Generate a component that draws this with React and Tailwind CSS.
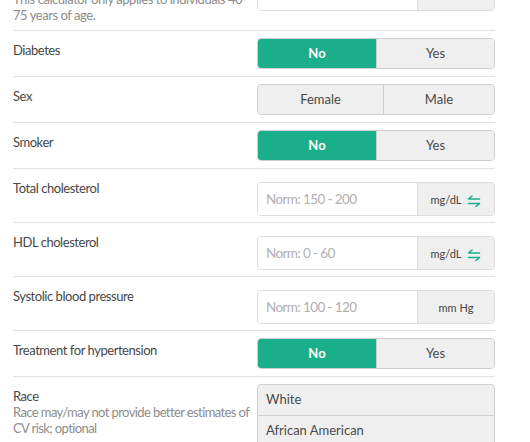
import React from 'react';

const SwapIcon = () => (
  <svg width="14" height="12" viewBox="0 0 14 12" fill="none" stroke="#1aae8a" strokeWidth="1.6" strokeLinecap="round">
    <path d="M1.5 4H12.5M1.5 4L5 1" />
    <path d="M1.5 8.5H12.5M12.5 8.5L9 11.5" />
  </svg>
);

const Toggle = ({ options, selected, widths }) => (
  <div className="flex h-[31px] w-[238px] rounded-[4px] border border-[#cfcfcf] overflow-hidden">
    {options.map((opt, i) => (
      <div
        key={opt}
        className={
          'flex items-center justify-center text-[13px] ' +
          (i > 0 ? 'border-l border-[#cfcfcf] ' : '') +
          (selected === i ? 'bg-[#1bae8b] text-white font-bold' : 'bg-[#efefef] text-[#4a4a4a]')
        }
        style={{ width: widths ? widths[i] : undefined, flex: widths ? 'none' : 1 }}
      >
        {opt}
      </div>
    ))}
  </div>
);

const NumInput = ({ placeholder, unit, swap }) => (
  <div className="mt-[6px] mb-[-1px] flex h-[34px] w-[238px] rounded-[4px] border border-[#dcdcdc] overflow-hidden">
    <div className="flex w-[159px] items-center bg-white pl-[8px] text-[13.5px] tracking-[-0.6px] text-[#b0b0b0]">{placeholder}</div>
    <div className="flex flex-1 items-center justify-center gap-[6px] border-l border-[#dcdcdc] bg-[#efefef] pt-[3px] text-[11px] text-[#444]">
      <span>{unit}</span>
      {swap && <SwapIcon />}
    </div>
  </div>
);

const Row = ({ label, desc, children }) => (
  <div className="flex items-start justify-between border-b border-[#e2e2e2] pt-[7px] pb-[7px]">
    <div className="pt-[4px] tracking-[-0.45px]">
      <div className="text-[13px] leading-[16px] text-[#484848]">{label}</div>
      {desc && <div className="w-[236px] text-[13px] leading-[16px] text-[#8c8c8c]">{desc}</div>}
    </div>
    {children}
  </div>
);

export default function App() {
  return (
    <div className="h-[442px] w-[530px] overflow-hidden bg-white" style={{ fontFamily: 'Lato, "Noto Sans", sans-serif' }}>
      <div className="ml-[13px] mt-[-36px] w-[482px]">
        <Row label="Age" desc="This calculator only applies to individuals 40-75 years of age.">
          <div className="mt-[6px] flex h-[34px] w-[238px] rounded-[4px] border border-[#dcdcdc] overflow-hidden">
            <div className="w-[159px] bg-white" />
            <div className="flex flex-1 items-center justify-center border-l border-[#dcdcdc] bg-[#efefef] text-[11px] text-[#444]">years</div>
          </div>
        </Row>
        <Row label="Diabetes">
          <Toggle options={['No', 'Yes']} selected={0} widths={[118, 118]} />
        </Row>
        <Row label="Sex">
          <Toggle options={['Female', 'Male']} selected={-1} widths={[125, 111]} />
        </Row>
        <Row label="Smoker">
          <Toggle options={['No', 'Yes']} selected={0} widths={[118, 118]} />
        </Row>
        <Row label="Total cholesterol">
          <NumInput placeholder="Norm: 150 - 200" unit="mg/dL" swap />
        </Row>
        <Row label="HDL cholesterol">
          <NumInput placeholder="Norm: 0 - 60" unit="mg/dL" swap />
        </Row>
        <Row label="Systolic blood pressure">
          <NumInput placeholder="Norm: 100 - 120" unit="mm Hg" />
        </Row>
        <Row label="Treatment for hypertension">
          <Toggle options={['No', 'Yes']} selected={0} widths={[118, 118]} />
        </Row>
        <div className="flex items-start justify-between pt-[7px]">
          <div className="pt-[4px] tracking-[-0.45px]">
            <div className="text-[13px] leading-[16px] text-[#484848]">Race</div>
            <div className="w-[240px] text-[13px] leading-[16px] tracking-[-0.6px] text-[#8c8c8c]">Race may/may not provide better estimates of CV risk; optional</div>
          </div>
          <div className="w-[238px] rounded-t-[4px] border border-[#cfcfcf] bg-[#efefef] text-[13px] text-[#4a4a4a]">
            <div className="flex h-[31px] items-center border-b border-[#cfcfcf] pl-[8px]">White</div>
            <div className="flex h-[31px] items-center border-b border-[#cfcfcf] pl-[8px]">African American</div>
            <div className="flex h-[31px] items-center pl-[8px]">Other</div>
          </div>
        </div>
      </div>
    </div>
  );
}
